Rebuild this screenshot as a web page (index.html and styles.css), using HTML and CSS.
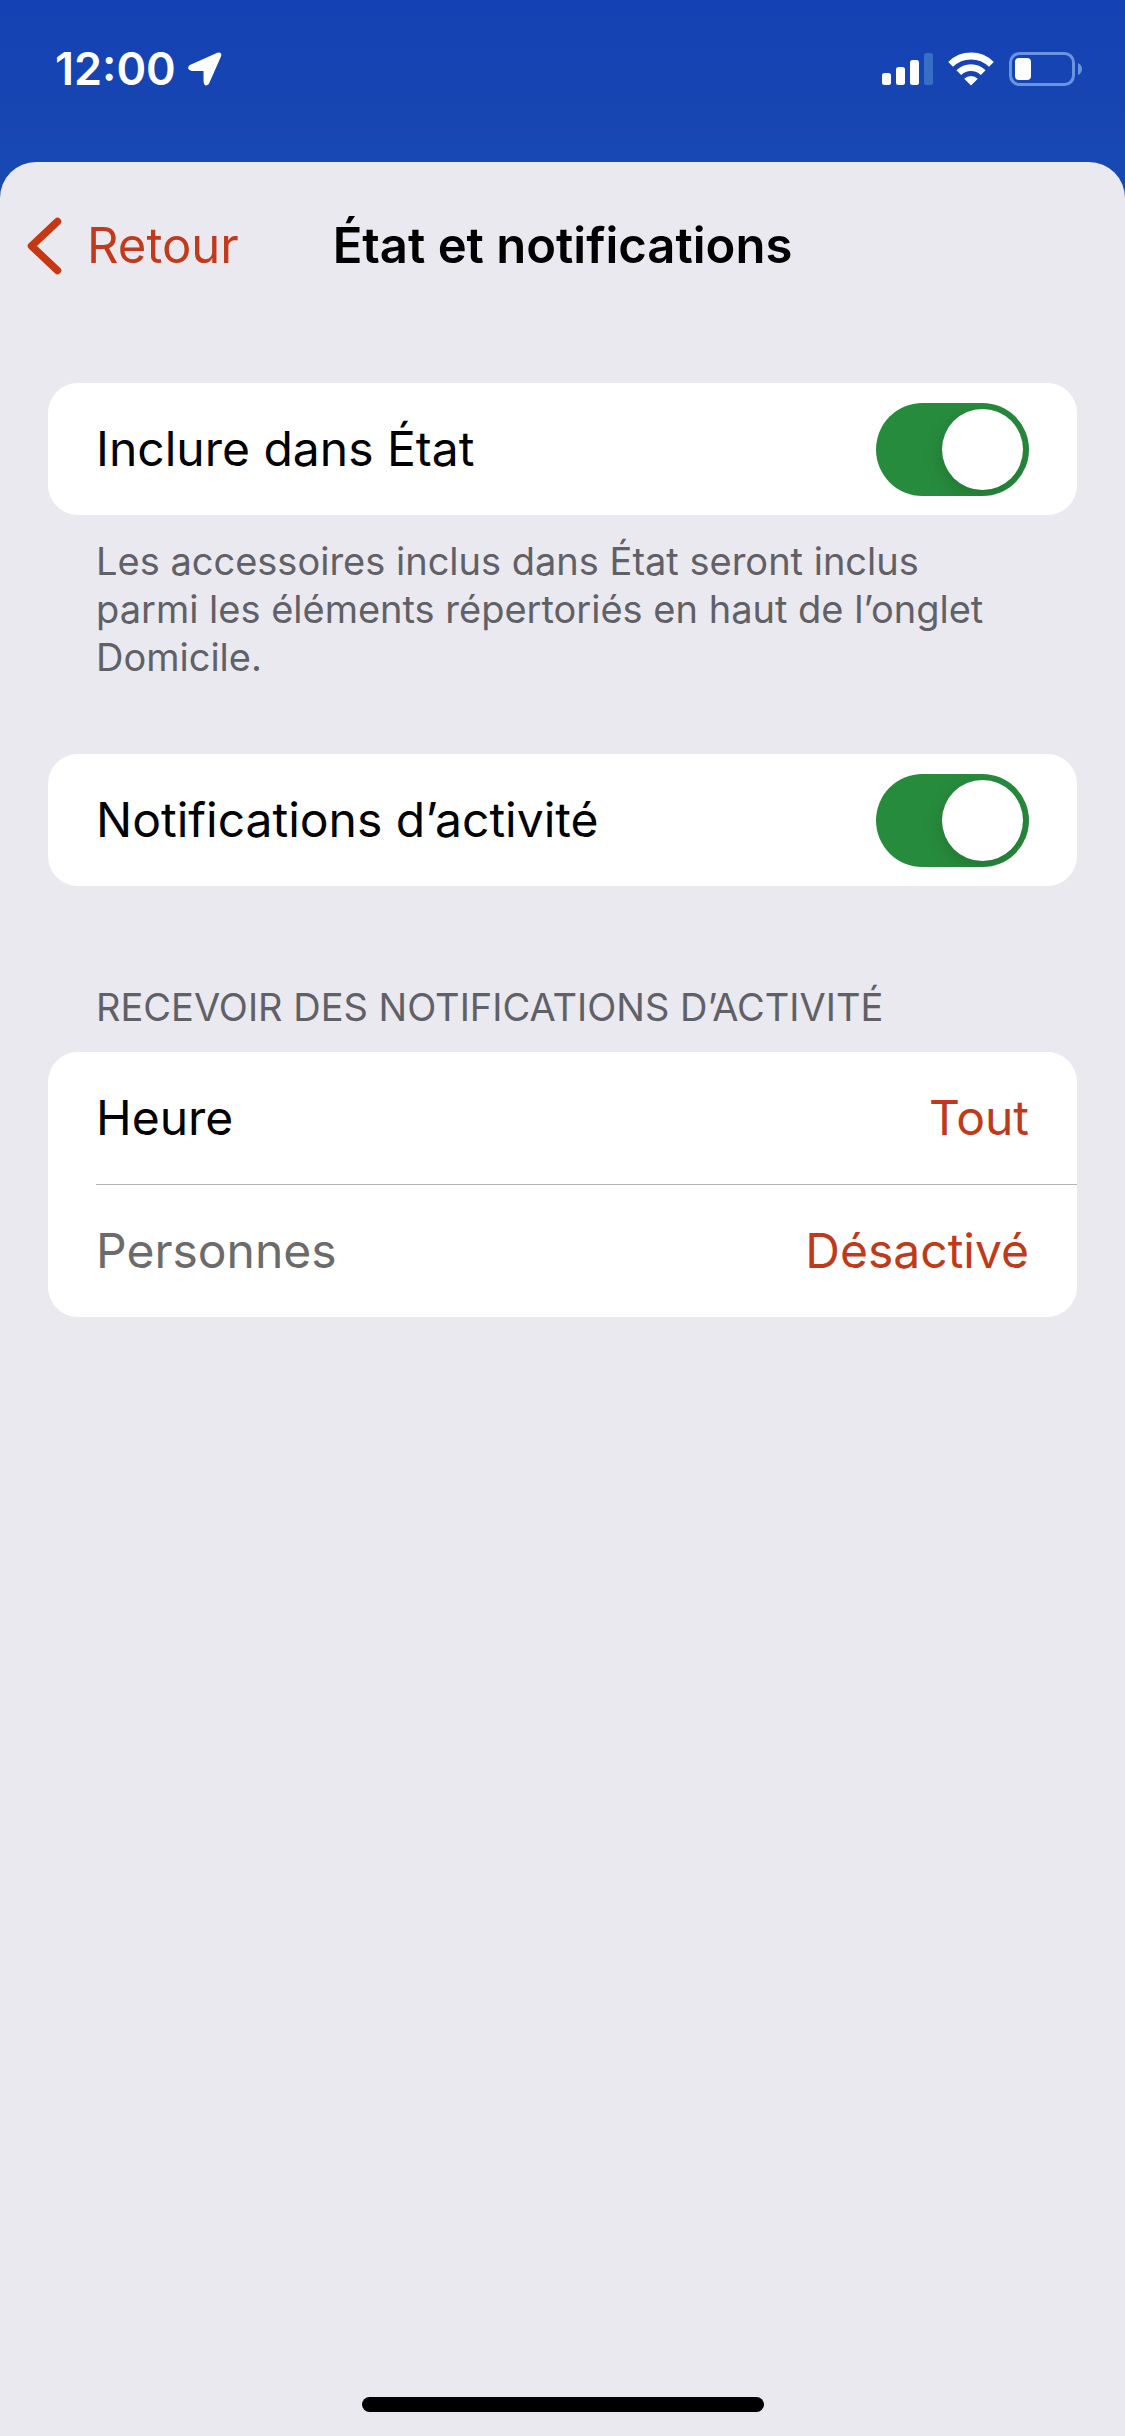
FILE: index.html
```html
<!DOCTYPE html>
<html lang="fr">
<head>
<meta charset="utf-8">
<meta name="viewport" content="width=device-width">
<title>État et notifications</title>
<link rel="stylesheet" href="styles.css">
</head>
<body>
<div class="statusbar">
  <div class="statusbar-left">
    <time class="clock">12:00</time>
    <svg class="icon" width="36" height="36" viewBox="0 0 36 36" aria-hidden="true"><path d="M3.500 15.300 31 3.200Q33.600 2.400 32.600 5L20.600 32.200Q18.300 34.200 18.100 31L18 18.500 4.500 18.400Q1.200 17.400 3.500 15.300Z" fill="#fff" stroke="#fff" stroke-width="3" stroke-linejoin="round"/></svg>
  </div>
  <div class="statusbar-right">
    <svg width="51" height="34" viewBox="0 0 51 34" aria-hidden="true"><g fill="#fff"><rect x="0" y="21" width="9" height="12" rx="2.500"/><rect x="14" y="15" width="9" height="18" rx="2.500"/><rect x="28" y="8" width="9" height="25" rx="2.500"/></g><rect x="42" y="1" width="9" height="32" rx="2.500" fill="#376fc6"/></svg>
    <svg width="46" height="34" viewBox="0 0 46 34" aria-hidden="true"><g fill="none" stroke="#fff" stroke-width="6.800"><path d="M2.600 12.400A29 29 0 0 1 43.400 12.400"/><path d="M10.800 20.600A17.300 17.300 0 0 1 35.200 20.600"/></g><path d="M23 33.500 16.200 26.700A9.600 9.600 0 0 1 29.800 26.700Z" fill="#fff"/></svg>
    <svg width="74" height="34" viewBox="0 0 74 34" aria-hidden="true"><rect x="1.500" y="1.500" width="63" height="31" rx="9" fill="none" stroke="#6b94df" stroke-width="3"/><rect x="6" y="6" width="16" height="22" rx="4" fill="#fff"/><path d="M69 11Q73 13 73 17T69 23Z" fill="#6b94df"/></svg>
  </div>
</div>
<main class="sheet">
  <header class="navbar">
    <a class="back" href="#"><svg width="36" height="58" viewBox="0 0 36 58" aria-hidden="true"><path d="M30.500 4.500 4.500 29 30.500 53.500" fill="none" stroke="#c63714" stroke-width="7.500" stroke-linecap="round" stroke-linejoin="round"/></svg><span>Retour</span></a>
    <h1 class="title">État et notifications</h1>
  </header>
  <div class="content">
    <section class="group">
      <div class="card">
        <label class="row"><span>Inclure dans État</span><input class="switch" type="checkbox" role="switch" checked></label>
      </div>
      <p class="note">Les accessoires inclus dans État seront inclus parmi les éléments répertoriés en haut de l’onglet Domicile.</p>
    </section>
    <section class="group">
      <div class="card">
        <label class="row"><span>Notifications d’activité</span><input class="switch" type="checkbox" role="switch" checked></label>
      </div>
    </section>
    <section class="group">
      <h2 class="heading">Recevoir des notifications d’activité</h2>
      <div class="card">
        <a class="row" href="#"><span>Heure</span><span class="value">Tout</span></a>
        <hr class="divider">
        <a class="row muted" href="#"><span>Personnes</span><span class="value">Désactivé</span></a>
      </div>
    </section>
  </div>
  <div class="home-indicator"></div>
</main>
</body>
</html>
```
FILE: styles.css
```css
* {
  box-sizing: border-box;
}

body {
  margin: 0;
  min-height: 100vh;
  display: flex;
  flex-direction: column;
  background: linear-gradient(#1441b4 0, #1848b2 162px, #1848b2 100%);
  color: #000;
  font-family: Inter, "Liberation Sans", sans-serif;
  font-size: 49px;
  line-height: 60px;
}

a {
  color: inherit;
  text-decoration: none;
}

.statusbar {
  display: flex;
  justify-content: space-between;
  align-items: center;
  height: 162px;
  padding: 0 42px 24px 55px;
  color: #fff;
}

.statusbar-left,
.statusbar-right {
  display: flex;
  align-items: center;
}

.statusbar-left {
  gap: 11px;
}

.statusbar-right {
  gap: 15px;
}

.clock {
  font-size: 45px;
  font-weight: 600;
}

.sheet {
  flex: 1;
  display: flex;
  flex-direction: column;
  padding-bottom: 24px;
  border-radius: 36px 36px 0 0;
  background: #ebe9f0;
}

.navbar {
  display: grid;
  grid-template-columns: 1fr auto 1fr;
  align-items: center;
  height: 168px;
  padding: 0 27px;
}

.back {
  display: flex;
  align-items: center;
  gap: 24px;
  color: #c23a1b;
}

.title {
  margin: 0;
  font-size: 49px;
  font-weight: 600;
}

.content {
  flex: 1;
  display: flex;
  flex-direction: column;
  gap: 73px;
  padding: 53px 48px 0;
}

.card {
  border-radius: 30px;
  background: #fff;
}

.row {
  display: flex;
  justify-content: space-between;
  align-items: center;
  height: 132px;
  padding: 0 48px;
  font-size: 48px;
  line-height: 60px;
}

.note {
  margin: 0;
  padding: 22px 48px 0;
  color: #606067;
  font-size: 38px;
  line-height: 48px;
}

.heading {
  margin: 0;
  padding: 24px 48px 21px;
  color: #606067;
  font-size: 38px;
  font-weight: 400;
  line-height: 48px;
  text-transform: uppercase;
}

.muted {
  color: #6b6b6b;
}

.value {
  color: #bf3a1b;
}

.divider {
  height: 1px;
  margin: 0 0 0 48px;
  border: 0;
  background: #b4b4b6;
}

.switch {
  appearance: none;
  display: flex;
  align-items: center;
  width: 153px;
  height: 93px;
  margin: 0;
  padding: 6px;
  overflow: hidden;
  border-radius: 47px;
  background: #b4b4b6;
}

.switch::before {
  content: "";
  width: 81px;
  height: 81px;
  border-radius: 50%;
  background: #fff;
  box-shadow: 0 6px 18px rgba(0, 0, 0, 0.15);
}

.switch:checked {
  justify-content: flex-end;
  background: #278b3d;
}

.home-indicator {
  align-self: center;
  width: 402px;
  height: 15px;
  border-radius: 8px;
  background: #000;
}
```
